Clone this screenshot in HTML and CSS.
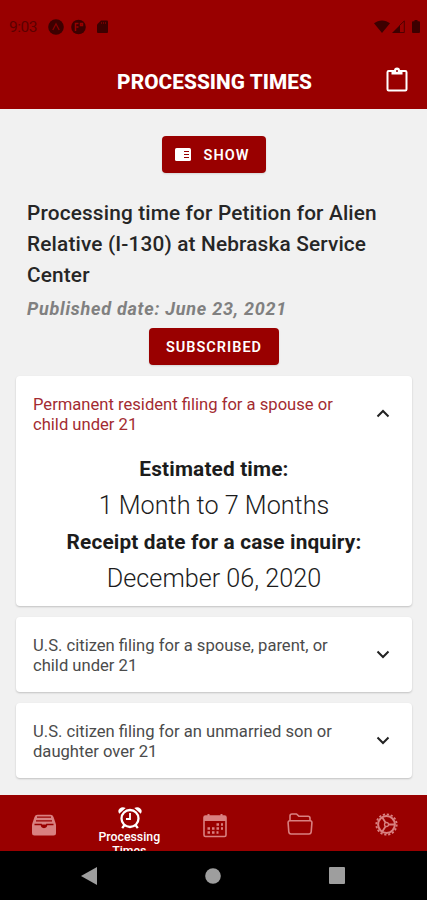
FILE: index.html
```html
<!DOCTYPE html>
<html lang="en">
<head>
<meta charset="utf-8">
<title>Processing Times</title>
<link rel="stylesheet" href="styles.css">
</head>
<body>
<div class="phone">
  <header class="top">
    <div class="status">
      <span class="clock">9:03</span>
      <svg class="st-a" width="16" height="16" viewBox="0 0 16 16"><circle cx="8" cy="8" r="7.8" fill="currentColor"/><path d="M4.8 11 8 4.8 11.2 11" fill="none" stroke="#800" stroke-width="1.3"/></svg>
      <svg class="st-p" width="15" height="16" viewBox="0 0 15 16"><circle cx="7.5" cy="8" r="7.3" fill="currentColor"/><path d="M4.500 12V4.500h3M5.500 8h2M9.500 4.500h2v2h-2z" fill="none" stroke="#900" stroke-width="1.500"/></svg>
      <svg class="st-s" width="11" height="13" viewBox="0 0 11 13"><path d="M4 .5h6a1 1 0 0 1 1 1V12a1 1 0 0 1-1 1H1a1 1 0 0 1-1-1V4.500z" fill="currentColor"/><path d="M4.500 2v2M6.500 2v2M8.500 2v2" stroke="#900" stroke-width=".6"/></svg>
      <span class="fill"></span>
      <svg width="16" height="13" viewBox="0 0 16 13"><path d="M0 3.300C4.500-.6 11.500-.6 16 3.300L8 13z" fill="currentColor"/></svg>
      <svg class="st-c" width="13" height="13" viewBox="0 0 13 13"><path d="M0 13 8 5v8z" fill="currentColor"/><path d="M7.500 5.500 12.300.9V12.500H8" fill="none" stroke="currentColor" stroke-width=".8"/></svg>
      <svg class="st-b" width="8" height="13" viewBox="0 0 8 13"><path d="M2.500 0h3v1.300H7a1 1 0 0 1 1 1V12a1 1 0 0 1-1 1H1a1 1 0 0 1-1-1V2.300a1 1 0 0 1 1-1h1.500z" fill="currentColor"/></svg>
    </div>
    <div class="appbar">
      <h1>PROCESSING TIMES</h1>
      <svg class="clip" width="22" height="25" viewBox="0 0 22 25"><rect x="1.500" y="4" width="19" height="19.500" rx="1.200" fill="none" stroke="#fff" stroke-width="2"/><path d="M5.500 3.500H8a3 3 0 0 1 6 0h2.500v4h-11z" fill="#fff"/><circle cx="11" cy="4" r="1" fill="#900"/></svg>
    </div>
  </header>
  <main>
    <button class="btn show"><svg width="16" height="13" viewBox="0 0 16 13"><rect width="16" height="13" rx="1.600" fill="#fff"/><path d="M9 3.500h5M9 6.500h5M9 9.500h5" stroke="#900" stroke-width="1.200"/></svg><span>SHOW</span></button>
    <h2>Processing time for Petition for Alien<br>Relative (I-130) at Nebraska Service<br>Center</h2>
    <p class="published">Published date: June 23, 2021</p>
    <button class="btn sub"><span>SUBSCRIBED</span></button>
    <section class="card open">
      <div class="row"><p class="active">Permanent resident filing for a spouse or<br>child under 21</p><svg width="14" height="9" viewBox="0 0 14 9"><path d="M1.500 7.500 7 2l5.500 5.500"/></svg></div>
      <div class="detail">
        <b>Estimated time:</b>
        <span>1 Month to 7 Months</span>
        <b>Receipt date for a case inquiry:</b>
        <span>December 06, 2020</span>
      </div>
    </section>
    <section class="card"><div class="row"><p>U.S. citizen filing for a spouse, parent, or<br>child under 21</p><svg width="14" height="9" viewBox="0 0 14 9"><path d="M1.500 1.500 7 7l5.500-5.500"/></svg></div></section>
    <section class="card"><div class="row"><p>U.S. citizen filing for an unmarried son or<br>daughter over 21</p><svg width="14" height="9" viewBox="0 0 14 9"><path d="M1.500 1.500 7 7l5.500-5.500"/></svg></div></section>
  </main>
  <nav class="tabs">
    <div class="tab"><svg width="26" height="24" viewBox="0 0 26 24"><path d="M1 11.500 3.500 4q.8-2.200 3-2.200h13q2.200 0 3 2.200L25 11.500V20q0 2.500-2.500 2.500h-19Q1 22.500 1 20z" fill="#d98080"/><path d="M6 4.200h14M5 7.800h16M3.500 11.500h6.700q.3 3 2.800 3t2.800-3h6.700" fill="none" stroke="#900" stroke-width="1.300"/><path d="M10 11.500h6q-.5 3-3 3t-3-3z" fill="#900"/></svg></div>
    <div class="tab current">
      <svg width="24" height="22" viewBox="0 0 24 22"><g fill="none" stroke="#fff"><circle cx="12" cy="11.500" r="8.500" stroke-width="2.300"/><path d="M12 6v6H8" stroke-width="1.800"/><path d="m6.500 18-2.300 3.200M17.500 18l2.300 3.200" stroke-width="2.300"/></g><path d="M1.200 6.800Q-.8 3.500 1.700 1.500T7.700 1zM22.800 6.800q2-3.300-.5-5.300T16.300 1z" fill="#fff"/></svg>
      <span>Processing<br>Times</span>
    </div>
    <div class="tab mid"><svg width="24" height="25" viewBox="0 0 24 25"><g fill="none" stroke="#d98080"><rect x="1" y="3" width="22" height="20.500" rx="1.500" stroke-width="1.600"/><path d="M1 5.500h22" stroke-width="5"/><path d="M5.500 1v4M18.500 1v4" stroke-width="2"/><path d="M13.500 11.500H20M4.500 15.500H20M4.500 19.500h11" stroke-width="2.400" stroke-dasharray="2.500 2"/></g></svg></div>
    <div class="tab mid"><svg width="26" height="22" viewBox="0 0 26 22"><g fill="none" stroke="#d98080" stroke-width="1.600" stroke-linejoin="round"><path d="M3 8V3q0-2 2-2h4.500l2.300 2.200H21q2 0 2 2V8"/><path d="M3 7.800h20q2 0 1.900 2l-.7 9q-.2 2.200-2.200 2.200H4q-2 0-2.200-2.200l-.7-9Q1 7.800 3 7.800z"/></g></svg></div>
    <div class="tab late"><svg width="23" height="23" viewBox="-11.500 -11.500 23 23"><g fill="none" stroke="#d98080"><circle r="8.400" stroke-width="2"/><circle r="10.200" stroke-width="1.800" stroke-dasharray="2.200 1.805"/><circle r="2" stroke-width="1.300"/><path d="M2 0H8M-1-2-4.200-7M-1 2-4.200 7" stroke-width="1.800"/></g></svg></div>
  </nav>
  <footer class="system">
    <svg width="16" height="18" viewBox="0 0 16 18"><path d="M16 0v18L0 9z"/></svg>
    <svg width="16" height="16" viewBox="0 0 16 16"><circle cx="8" cy="8" r="7.800"/></svg>
    <svg width="16" height="17" viewBox="0 0 16 17"><rect width="16" height="17" rx="1"/></svg>
  </footer>
</div>
</body>
</html>
```
FILE: styles.css
```css
* { box-sizing: border-box; }
body { margin: 0; font-family: Roboto, sans-serif; }
h1, h2, p { margin: 0; }
svg { display: block; flex: none; }
.phone { width: 427px; height: 900px; display: flex; flex-direction: column; background: #f1f1f1; overflow: hidden; }
.top { height: 109px; background: #900; flex: none; }
.status { height: 53px; display: flex; align-items: center; padding: 0 7px 0 9px; color: #3d0000; }
.clock { font-size: 15.500px; width: 39px; color: #5c0000; letter-spacing: -.5px; }
.st-p { margin-left: 7px; }
.st-s { margin-left: 11px; }
.fill { flex: 1; }
.st-c { margin-left: 2px; }
.st-b { margin-left: 7px; }
.appbar { height: 58px; display: grid; grid-template-columns: 1fr auto 1fr; align-items: center; padding-left: 2px; }
h1 { grid-column: 2; font-size: 20.800px; font-weight: 800; letter-spacing: .05px; color: #fff; white-space: nowrap; }
.clip { justify-self: end; margin-right: 19px; margin-bottom: 5px; }
main { flex: 1; min-height: 0; padding: 27px 15px 0 16px; display: flex; flex-direction: column; }
.btn { border: 0; padding: 0; font: 600 14.500px Roboto, sans-serif; letter-spacing: 1px; color: #fff; background: #900; height: 37px; border-radius: 4px; display: flex; align-items: center; justify-content: center; align-self: center; box-shadow: 0 1px 2px rgba(0,0,0,.12); flex: none; }
.btn span { padding-top: 2px; }
.show { width: 104px; gap: 13px; padding-right: 4px; }
.sub { width: 130px; margin-top: 7px; letter-spacing: 1px; }
h2 { margin: 25px 0 0 11px; font-size: 20.800px; line-height: 31px; font-weight: 500; letter-spacing: .16px; color: #262626; white-space: nowrap; }
.published { margin: 6px 0 0 11px; font-size: 18px; line-height: 24px; font-weight: 700; font-style: italic; color: #808080; letter-spacing: .74px; white-space: nowrap; }
.card { background: #fff; border-radius: 4px; height: 75px; margin-top: 11px; flex: none; box-shadow: 0 1px 2px rgba(0,0,0,.2); }
.card.open { height: 230px; }
.row { display: flex; justify-content: space-between; align-items: center; height: 75px; padding: 0 22px 0 17px; }
.row p { font-size: 16.600px; line-height: 19.500px; color: #4b4b4b; white-space: nowrap; padding-top: 2px; }
.row .active { color: #a32b31; }
.row svg path { fill: none; stroke: #222; stroke-width: 2; }
.detail { display: flex; flex-direction: column; align-items: center; color: #1c1c1c; line-height: 36.700px; }
.detail b { font-size: 20.800px; letter-spacing: .16px; }
.detail span { font-size: 25.200px; font-weight: 300; }
.tabs { height: 56px; background: #900; display: grid; grid-template-columns: repeat(5, 1fr); flex: none; overflow: hidden; padding-left: 1px; }
.tab { display: flex; flex-direction: column; align-items: center; padding-top: 18px; }
.tab.mid { padding-left: 2px; }
.tab.late { padding-left: 4px; }
.current { padding: 12px 0 0 2px; }
.current span { margin-top: 1px; margin-left: -1px; color: #fff; font-size: 12.300px; line-height: 14px; font-weight: 500; text-align: center; }
.system { height: 49px; background: #000; display: flex; justify-content: space-between; align-items: center; padding: 0 82px 0 81px; flex: none; }
.system svg { fill: #9e9e9e; }
```
